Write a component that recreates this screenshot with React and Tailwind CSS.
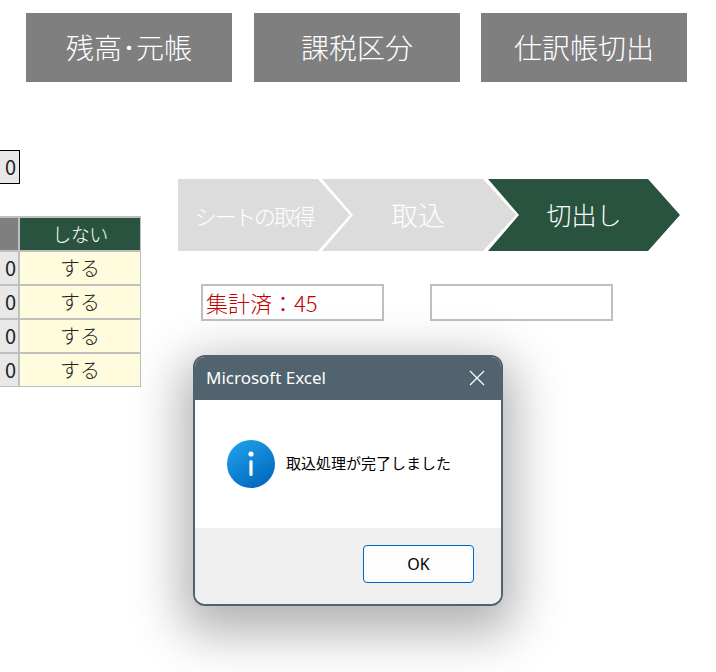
const cjk = "font-['Noto_Sans_CJK_JP','Noto_Sans',sans-serif]";

function TopButton({ label }) {
  return (
    <div className={`flex h-[69px] w-[206px] items-center justify-center bg-[#7f7f7f] pb-[2px] text-[28px] font-light text-white ${cjk}`}>
      {label}
    </div>
  );
}

function Row() {
  return (
    <div className="grid grid-cols-[29px_120px] gap-x-[2px] border-t-2 border-[#bfbfbf] bg-[#bfbfbf]">
      <div className="flex h-[32px] items-center justify-end bg-[#e8e8e8] pr-[2px] text-[20px] text-[#222]">0</div>
      <div className="flex h-[32px] items-center justify-center bg-[#fffcdd] text-[20px] font-light text-[#222]">する</div>
    </div>
  );
}

function Chevron({ label, className, textClass }) {
  return (
    <div className={`flex h-[72px] items-center justify-center ${className}`}>
      <span className={`font-light text-white ${textClass}`}>{label}</span>
    </div>
  );
}

function InfoIcon() {
  return (
    <svg width="48" height="48" viewBox="0 0 48 48">
      <defs>
        <linearGradient id="infoGrad" x1="0.2" y1="0" x2="0.8" y2="1">
          <stop offset="0" stopColor="#1f9fe8" />
          <stop offset="1" stopColor="#0067bf" />
        </linearGradient>
      </defs>
      <circle cx="24" cy="24" r="24" fill="url(#infoGrad)" />
      <circle cx="24" cy="14" r="2.6" fill="#fff" />
      <rect x="22.4" y="20" width="3.2" height="16" rx="1.6" fill="#fff" />
    </svg>
  );
}

export default function App() {
  return (
    <div className={`relative h-[672px] w-[716px] overflow-hidden bg-white ${cjk}`}>
      {/* top buttons */}
      <div className="flex pl-[26px] pt-[13px]">
        <TopButton label="残高･元帳" />
        <div className="ml-[22px]"><TopButton label="課税区分" /></div>
        <div className="ml-[21px]"><TopButton label="仕訳帳切出" /></div>
      </div>

      <div className="mt-[68px] flex">
        {/* clipped table on the left */}
        <div className="ml-[-11px] w-[152px] shrink-0">
          <div className="flex h-[34px] w-[31px] items-center justify-end border border-black bg-[#e8e8e8] pr-[3px] text-[20px] text-[#222]">0</div>
          <div className="mt-[32px] w-[152px] border-r border-b border-[#bfbfbf]">
            <div className="grid grid-cols-[29px_120px] gap-x-[2px] border-t-2 border-[#bfbfbf] bg-[#bfbfbf]">
              <div className="h-[32px] bg-[#7f7f7f]" />
              <div className="flex h-[32px] items-center justify-center bg-[#2a533f] text-[19px] font-light tracking-[-0.5px] text-white">しない</div>
            </div>
            <Row />
            <Row />
            <Row />
            <Row />
          </div>
        </div>

        {/* steps and status boxes */}
        <div className="ml-[37px] pt-[29px]">
          <div className="flex">
            <Chevron
              label="シートの取得"
              className="w-[172px] bg-[#dcdcdc] pr-[20px] [clip-path:polygon(0_0,140px_0,172px_36px,140px_72px,0_72px)]"
              textClass="text-[22px] tracking-[-2.2px]"
            />
            <Chevron
              label="取込"
              className="ml-[-28px] w-[194px] bg-[#dcdcdc] pr-[2px] [clip-path:polygon(0_0,161px_0,194px_36px,161px_72px,0_72px,31px_36px)]"
              textClass="text-[27px]"
            />
            <Chevron
              label="切出し"
              className="ml-[-28px] w-[192px] bg-[#2a533f] [clip-path:polygon(0_0,160px_0,192px_36px,160px_72px,0_72px,31px_36px)]"
              textClass="text-[25px]"
            />
          </div>
          <div className="ml-[23px] mt-[33px] flex gap-[46px]">
            <div className="flex h-[37px] w-[183px] items-center border-2 border-[#bfbfbf] pl-[3px] text-[22px] font-light text-[#c00000]">集計済：45</div>
            <div className="h-[37px] w-[183px] border-2 border-[#bfbfbf]" />
          </div>
        </div>
      </div>

      {/* message box */}
      <div className="absolute left-[193px] top-[355px] flex h-[251px] w-[310px] flex-col overflow-hidden rounded-[12px] border-2 border-[#50636f] bg-white shadow-[0_16px_50px_12px_rgba(0,0,0,0.3)]">
        <div className="flex h-[43px] shrink-0 items-center justify-between bg-[#50636f] pb-[2px] pl-[11px] pr-[16px] font-['Noto_Sans',sans-serif] text-[17px] text-white">
          <span>Microsoft Excel</span>
          <svg width="16" height="16" viewBox="0 0 16 16" stroke="#fff" strokeWidth="1.2">
            <path d="M1 1 L15 15 M15 1 L1 15" />
          </svg>
        </div>
        <div className="flex h-[128px] shrink-0 items-center pl-[32px]">
          <InfoIcon />
          <span className="ml-[11px] pb-[2px] text-[15px] text-black">取込処理が完了しました</span>
        </div>
        <div className="flex flex-1 items-start justify-end bg-[#efefef] pr-[27px] pt-[17px]">
          <div className="flex h-[38px] w-[111px] items-center justify-center rounded-[4px] border border-[#0067c0] bg-[#fdfdfd] font-['Noto_Sans',sans-serif] text-[16px] text-black">OK</div>
        </div>
      </div>
    </div>
  );
}
